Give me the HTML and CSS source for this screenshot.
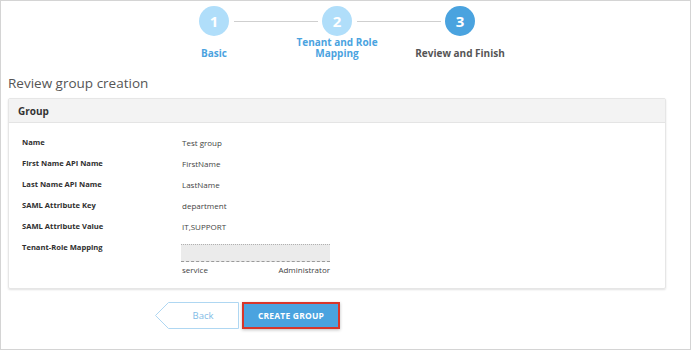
FILE: index.html
```html
<!DOCTYPE html>
<html>
<head>
<title>Review group creation</title>
<meta charset="UTF-8">
<meta name="viewport" content="width=device-width, initial-scale=1">
<link rel="stylesheet" href="styles.css">
</head>
<body>

<div class="frame">
    <div class="page">

        <!-- 步骤条 -->
        <div class="stepper">
            <div class="step-dots">
                <span class="dot done">1</span>
                <span class="step-line"></span>
                <span class="dot done">2</span>
                <span class="step-line"></span>
                <span class="dot active">3</span>
            </div>
            <div class="step-labels">
                <span class="step-label done">Basic</span>
                <span class="step-label done">Tenant and Role Mapping</span>
                <span class="step-label active">Review and Finish</span>
            </div>
        </div>

        <h1 class="page-title">Review group creation</h1>

        <!-- 组信息卡片 -->
        <div class="card">
            <div class="card-head">Group</div>
            <div class="card-body">
                <div class="row">
                    <div class="label">Name</div>
                    <div class="value">Test group</div>
                </div>
                <div class="row">
                    <div class="label">First Name API Name</div>
                    <div class="value">FirstName</div>
                </div>
                <div class="row">
                    <div class="label">Last Name API Name</div>
                    <div class="value">LastName</div>
                </div>
                <div class="row">
                    <div class="label">SAML Attribute Key</div>
                    <div class="value">department</div>
                </div>
                <div class="row">
                    <div class="label">SAML Attribute Value</div>
                    <div class="value">IT,SUPPORT</div>
                </div>
                <div class="row">
                    <div class="label">Tenant-Role Mapping</div>
                    <div class="value mapping">
                        <div class="redacted"></div>
                        <div class="map-row">
                            <span>service</span>
                            <span>Administrator</span>
                        </div>
                    </div>
                </div>
            </div>
        </div>

        <!-- 按钮 -->
        <div class="actions">
            <a class="btn-back" href="javascript:;">
                <svg class="back-shape" viewBox="0 0 84 27" preserveAspectRatio="none">
                    <path d="M13.5 0.5 H83.5 V26.5 H13.5 L0.5 13.5 Z" fill="#fff" stroke="#afd7f2"/>
                </svg>
                <span>Back</span>
            </a>
            <a class="btn-create" href="javascript:;">CREATE GROUP</a>
        </div>

    </div>
</div>

</body>
</html>
```

FILE: styles.css
```css
/* 基础 */
body {
    margin: 0;
    font-family: "Open Sans", "Liberation Sans", sans-serif;
    color: #333;
}

/* 外框 */
.frame {
    box-sizing: border-box;
    width: 691px;
    height: 350px;
    border: 1px solid #d4d4d4;
    overflow: hidden;
}

.page {
    width: 658px;
    margin-left: 7px;
    padding-top: 5px;
}

/* 步骤条 */
.stepper {
    display: flex;
    flex-direction: column;
    align-items: center;
}

.step-dots {
    display: flex;
    align-items: center;
}

.dot {
    width: 30px;
    height: 30px;
    border-radius: 50%;
    display: flex;
    justify-content: center;
    align-items: center;
    color: #fff;
    font-weight: bold;
    font-size: 15px;
}

.dot.done {
    background: #b0defa;
}

.dot.active {
    background: #4aa3df;
}

.step-line {
    width: 84px;
    height: 1px;
    margin: 0 4px 0 5px;
    background: #cfcfcf;
}

.step-labels {
    display: flex;
    align-items: flex-end;
    margin-top: 1px;
}

.step-label {
    box-sizing: border-box;
    width: 123px;
    padding: 0 14px;
    text-align: center;
    font-size: 10px;
    line-height: 11px;
    font-weight: bold;
}

.step-label.done {
    color: #4aa3df;
}

.step-label.active {
    color: #555;
}

/* 标题 */
.page-title {
    margin: 15px 0 6px 0;
    font-size: 13.5px;
    line-height: 18px;
    font-weight: normal;
    color: #555;
}

/* 卡片 */
.card {
    border: 1px solid #e6e6e6;
    box-shadow: 0 1px 2px rgba(0, 0, 0, 0.12);
    border-radius: 2px;
}

.card-head {
    background: #f3f3f3;
    border-bottom: 1px solid #e4e4e4;
    height: 23px;
    line-height: 24px;
    padding-left: 9px;
    font-size: 10px;
    font-weight: bold;
    color: #333;
}

.card-body {
    padding: 9px 0 13px 13px;
}

.row {
    display: flex;
    line-height: 21px;
    font-size: 8px;
}

.label {
    width: 160px;
    font-size: 7.6px;
    font-weight: bold;
    color: #2f2f2f;
}

.value {
    color: #444;
}

/* 租户角色映射 */
.mapping {
    width: 148px;
    padding-top: 7px;
    line-height: 11px;
}

.redacted {
    box-sizing: border-box;
    height: 18px;
    margin: 0 0 2px -1px;
    background: #ebebeb;
    border-top: 1px dotted #b0b0b0;
    border-bottom: 1px dashed #9a9a9a;
}

.map-row {
    display: flex;
    justify-content: space-between;
}

/* 按钮 */
.actions {
    display: flex;
    align-items: center;
    gap: 3px;
    margin: 13px 0 0 147px;
}

.btn-back {
    position: relative;
    width: 84px;
    height: 27px;
    display: flex;
    justify-content: center;
    align-items: center;
    padding-left: 12px;
    box-sizing: border-box;
    text-decoration: none;
    color: #7fbbe6;
    font-size: 9.5px;
}

.back-shape {
    position: absolute;
    left: 0;
    top: 0;
    width: 100%;
    height: 100%;
}

.btn-back span {
    position: relative;
}

.btn-create {
    box-sizing: border-box;
    width: 98px;
    height: 27px;
    display: flex;
    justify-content: center;
    align-items: center;
    background: #4aa3df;
    border: 2px solid #d8362a;
    box-shadow: 0 1px 3px rgba(0, 0, 0, 0.25);
    color: #fff;
    font-size: 8.5px;
    font-weight: bold;
    letter-spacing: 0.2px;
    text-decoration: none;
}
```
